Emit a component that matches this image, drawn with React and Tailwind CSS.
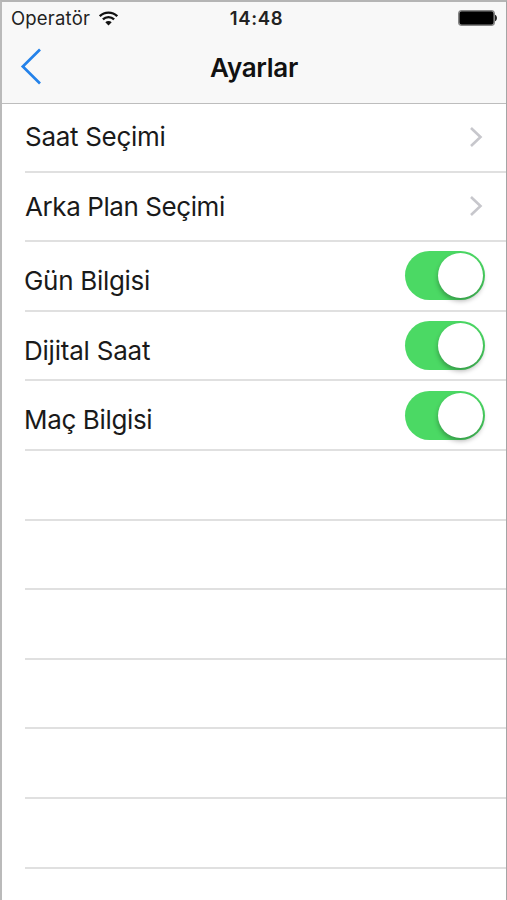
import { useState } from 'react';

const links = [
  { label: 'Saat Seçimi', className: 'tracking-[-0.3px]' },
  { label: 'Arka Plan Seçimi', className: 'tracking-[-0.42px]' },
];

const options = [
  { id: 'day', label: 'Gün Bilgisi', className: 'tracking-[-0.3px]' },
  { id: 'digital', label: 'Dijital Saat', className: 'tracking-[-0.22px]' },
  { id: 'match', label: 'Maç Bilgisi', className: 'tracking-[-0.35px]' },
];

const emptyRows = [1, 2, 3, 4, 5, 6];

function StatusBar() {
  return (
    <div className="grid h-[32px] grid-cols-3 items-center pl-[9px] pr-[9px] text-[#222]">
      <div className="flex items-center gap-[9px]">
        <span className="text-[18.5px] leading-none tracking-[0.2px]">Operatör</span>
        <svg className="h-[15px] w-[19px]" viewBox="0 0 19 15" fill="none" stroke="#111" strokeWidth="2.3">
          <path d="M0.8 5.2a12.3 12.3 0 0 1 17.4 0" />
          <path d="M3.9 8.4a7.9 7.9 0 0 1 11.2 0" />
          <path d="M9.5 14.6 6.3 11.3a4.5 4.5 0 0 1 6.4 0z" fill="#111" stroke="none" />
        </svg>
      </div>
      <span className="pl-[5px] text-center text-[18.5px] font-semibold leading-none tracking-[0.7px]">14:48</span>
      <svg className="h-[16px] w-[39px] justify-self-end" viewBox="0 0 39 16">
        <rect x="0.8" y="0.8" width="35.4" height="14.4" rx="3" fill="#000" stroke="#858585" strokeWidth="1.6" />
        <path d="M37 4.8c2.6 1 2.6 5.4 0 6.4z" fill="#222" />
      </svg>
    </div>
  );
}

function Toggle({ checked, onChange }) {
  return (
    <button
      type="button"
      role="switch"
      aria-checked={checked}
      onClick={onChange}
      className={`flex h-[49px] w-[80px] items-center rounded-full p-[2px] ${
        checked ? 'justify-end bg-[#4bd964]' : 'justify-start bg-[#e5e5e5]'
      }`}
    >
      <span className="size-[45px] rounded-full bg-white shadow-[0_3px_5px_rgba(0,0,0,0.3)]" />
    </button>
  );
}

function App() {
  const [values, setValues] = useState({ day: true, digital: true, match: true });

  const toggle = (id) => setValues({ ...values, [id]: !values[id] });

  return (
    <div className="relative h-[900px] w-[507px] overflow-hidden border-l-2 border-r border-t-2 border-l-[#bababa] border-r-[#a5a5a5] border-t-[#b5b5b5] bg-white font-['Inter',sans-serif] text-[#1a1a1a]">
      <header className="h-[102px] border-b border-[#bdbdbd] bg-[#f8f8f8]">
        <StatusBar />
        <div className="grid h-[67px] grid-cols-3 items-center">
          <button type="button" aria-label="Geri" className="pb-[3px] pl-[18px]">
            <svg className="h-[38px] w-[22px]" viewBox="0 0 22 38" fill="none" stroke="#2482ea" strokeWidth="2.7">
              <path d="M20 2.5 2.8 19.5 20 36.5" />
            </svg>
          </button>
          <h1 className="text-center text-[26px] font-semibold tracking-[-0.3px] text-[#111]">Ayarlar</h1>
        </div>
      </header>

      <ul className="-mt-px pl-[23px]">
        {links.map((item) => (
          <li key={item.label} className="flex h-[69.6px] items-center justify-between border-b-2 border-[#e0e0e0] pr-[23px]">
            <span className={`text-[26px] ${item.className}`}>{item.label}</span>
            <svg className="h-[22px] w-[14px]" viewBox="0 0 14 22" fill="none" stroke="#c7c7cc" strokeWidth="2.6">
              <path d="M2 2 11.5 11 2 20" />
            </svg>
          </li>
        ))}
        {options.map((item) => (
          <li key={item.id} className="flex h-[69.6px] items-center justify-between border-b-2 border-[#e0e0e0] pr-[21px]">
            <span className={`-ml-px pt-[9px] text-[26px] ${item.className}`}>{item.label}</span>
            <Toggle checked={values[item.id]} onChange={() => toggle(item.id)} />
          </li>
        ))}
        {emptyRows.map((row) => (
          <li key={row} className="h-[69.6px] border-b-2 border-[#e0e0e0]" />
        ))}
      </ul>

      <div className="absolute -left-[2px] top-[243px] h-[8px] w-[2px] bg-[#333]" />
      <div className="absolute -left-[2px] top-[694px] h-[9px] w-[2px] bg-[#333a50]" />
      <div className="absolute -left-[2px] top-[801px] h-[17px] w-[2px] border-y-2 border-[#666] bg-[#c3c65c]" />
    </div>
  );
}

export default App;
